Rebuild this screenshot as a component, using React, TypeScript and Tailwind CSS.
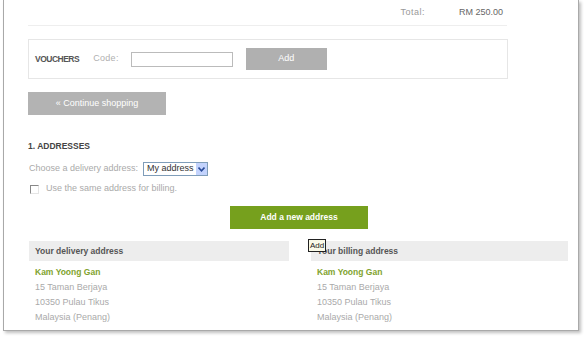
const font = { fontFamily: '"Liberation Sans", Arial, sans-serif' };

function AddressBlock({ title, tooltip }: { title: string; tooltip?: boolean }) {
  return (
    <div className="relative flex flex-col">
      <div className="h-[20px] bg-[#ededed] flex items-center pl-[6px] text-[8.5px] font-bold text-[#555]">
        {title}
      </div>
      {tooltip && (
        <div className="absolute left-[-3px] top-[-2px] h-[13px] px-[1px] border border-[#222] bg-[#fafae8] text-[8px] leading-[11px] text-[#222]">
          Add
        </div>
      )}
      <div className="flex flex-col pl-[6px] pt-[4px] text-[9px] leading-[15px]">
        <span className="text-[#7fa32e] font-bold text-[8.5px]">Kam Yoong Gan</span>
        <span className="text-[#aaa]">15 Taman Berjaya</span>
        <span className="text-[#aaa]">10350 Pulau Tikus</span>
        <span className="text-[#aaa]">Malaysia (Penang)</span>
      </div>
    </div>
  );
}

export default function App() {
  return (
    <div className="w-[587px] h-[339px] bg-white overflow-hidden" style={font}>
      <div className="ml-[3px] w-[576px] h-[331px] border-l border-r border-b border-[#a9a9a9] shadow-[2px_2px_3px_rgba(0,0,0,0.25)] bg-white pl-[24px] flex flex-col">
        {/* Totals */}
        <div className="w-[479px] h-[26px] border-b border-[#eeeeee] flex items-center justify-end text-[9px] text-[#999]">
          <span className="mr-[34px] tracking-[0.5px]">Total:</span>
          <span className="mr-[4px] text-[#666]">RM 250.00</span>
        </div>

        {/* Vouchers */}
        <div className="mt-[13px] w-[480px] h-[40px] border border-[#e6e6e6] flex items-center">
          <span className="ml-[6px] text-[8.5px] font-bold tracking-[-0.5px] text-[#555]">VOUCHERS</span>
          <span className="ml-[14px] text-[9px] tracking-[0.3px] text-[#b0b0b0]">Code:</span>
          <div className="ml-[12px] w-[102px] h-[15px] border border-[#bbb] bg-white" />
          <div className="ml-[13px] w-[81px] h-[22px] bg-[#b0b0b0] text-white text-[9px] flex items-center justify-center">
            Add
          </div>
        </div>

        {/* Continue shopping */}
        <div className="mt-[13px] w-[138px] h-[23px] bg-[#b3b3b3] text-white text-[9px] flex items-center justify-center">
          « Continue shopping
        </div>

        {/* Addresses */}
        <div className="mt-[25px] text-[8.5px] font-bold text-[#444] leading-[12px]">1. ADDRESSES</div>
        <div className="mt-[10px] flex items-center h-[14px] ml-[1px]">
          <span className="text-[9px] text-[#aaa]">Choose a delivery address:</span>
          <div className="ml-[5px] w-[65px] h-[14px] border border-[#7f9db9] flex items-center bg-white">
            <span className="flex-1 pl-[3px] text-[9px] text-[#333]">My address</span>
            <div className="w-[11px] h-[12px] bg-[#c3d3fd] flex items-center justify-center">
              <svg width="7" height="5" viewBox="0 0 7 5">
                <path d="M0.5 0.5 L3.5 3.8 L6.5 0.5" fill="none" stroke="#2a4c9a" strokeWidth="1.6" />
              </svg>
            </div>
          </div>
        </div>
        <div className="mt-[7px] flex items-center h-[12px] ml-[2px]">
          <div className="w-[9px] h-[9px] border-l border-t border-[#888] border-r border-b border-r-[#e5e5e5] border-b-[#e5e5e5]" />
          <span className="ml-[7px] text-[9px] text-[#aaa]">Use the same address for billing.</span>
        </div>

        <div className="mt-[11px] ml-[202px] w-[138px] h-[23px] bg-[#76a01d] text-white text-[8.5px] font-bold flex items-center justify-center">
          Add a new address
        </div>

        <div className="mt-[12px] flex">
          <div className="ml-[1px] w-[260px]">
            <AddressBlock title="Your delivery address" />
          </div>
          <div className="ml-[22px] w-[257px]">
            <AddressBlock title="Your billing address" tooltip />
          </div>
        </div>
      </div>
    </div>
  );
}
